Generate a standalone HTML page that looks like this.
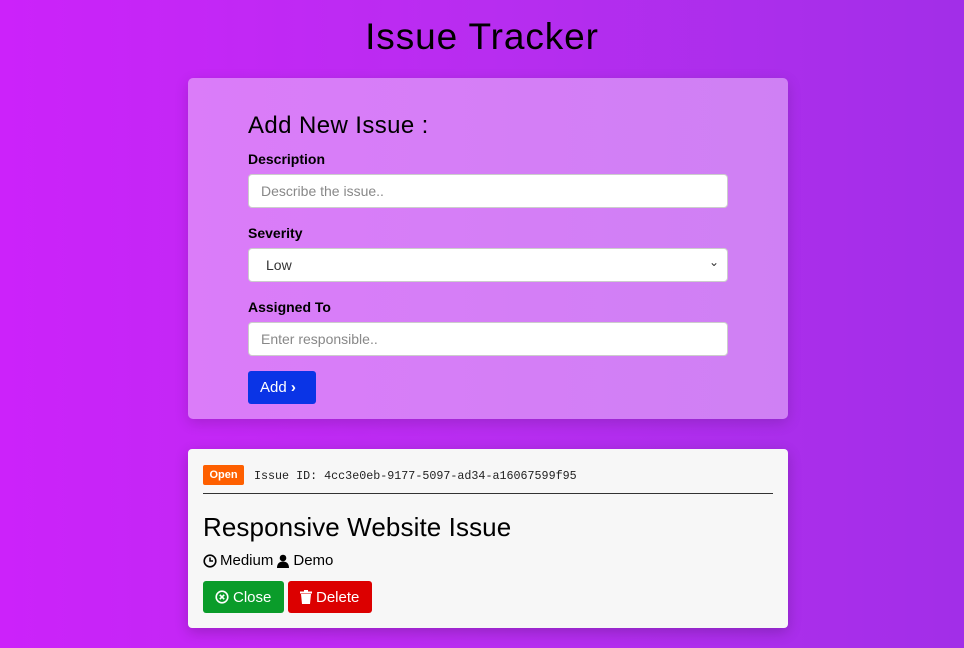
<!DOCTYPE html>
<html><head><style>
*{box-sizing:border-box;margin:0;padding:0}
body{width:964px;height:648px;overflow:hidden;background:linear-gradient(90deg,#cc22fa 0%,#b82df0 50%,#a22ee8 100%);font-family:"Liberation Sans",sans-serif;position:relative}
h1{position:absolute;top:16px;left:0;width:964px;text-align:center;font-size:37px;font-weight:normal;color:#000;letter-spacing:0.9px}
.form{position:absolute;left:188px;top:78px;width:600px;height:341px;border-radius:5px;background:linear-gradient(90deg,#db7cf9,#cf80f4);box-shadow:0 4px 14px rgba(0,0,0,.15)}
.form h2{position:absolute;left:60px;top:34px;font-size:24px;font-weight:normal;letter-spacing:0.4px}
.lbl{position:absolute;left:60px;font-size:14px;font-weight:bold}
.inp{position:absolute;left:60px;width:480px;height:34px;background:#fff;border:1px solid #ccc;border-radius:4px;font-size:14px;color:#888;padding:8px 12px}
.add{position:absolute;left:60px;top:293px;width:68px;height:33px;background:#0a34e6;border-radius:3px;color:#fff;font-size:15px;padding:8px 12px}
.card{position:absolute;left:188px;top:449px;width:600px;height:179px;background:#f7f7f7;border-radius:4px;box-shadow:0 4px 14px rgba(0,0,0,.2)}
.badge{position:absolute;left:15px;top:16px;width:41px;height:20px;background:#fe5f00;border-radius:2px;color:#fff;font-size:11px;font-weight:bold;text-align:center;line-height:20px}
.id{position:absolute;left:66px;top:20px;font-family:"Liberation Mono",monospace;font-size:11.7px;color:#222}
.hr{position:absolute;left:15px;top:44px;width:570px;border-top:1px solid #333}
.title{position:absolute;left:15px;top:63px;font-size:26px;letter-spacing:0.1px}
.meta{position:absolute;left:15px;top:103px;font-size:15px;display:flex;align-items:center;gap:3px}
.btn{position:absolute;top:132px;height:32px;border-radius:3px;color:#fff;font-size:15px;display:flex;align-items:center;gap:4px;padding-left:12px}
</style></head><body>
<h1>Issue Tracker</h1>
<div class="form">
<h2>Add New Issue :</h2>
<div class="lbl" style="top:73px">Description</div>
<div class="inp" style="top:96px">Describe the issue..</div>
<div class="lbl" style="top:147px">Severity</div>
<div class="inp" style="top:170px;color:#333;padding-left:17px">Low<span style="position:absolute;right:8px;top:6px;font-size:12px">&#8964;</span></div>
<div class="lbl" style="top:221px">Assigned To</div>
<div class="inp" style="top:244px">Enter responsible..</div>
<div class="add">Add <b>&#8250;</b></div>
</div>
<div class="card">
<div class="badge">Open</div>
<div class="id">Issue ID: 4cc3e0eb-9177-5097-ad34-a16067599f95</div>
<div class="hr"></div>
<div class="title">Responsive Website Issue</div>
<div class="meta"><svg width="14" height="14" viewBox="0 0 14 14"><circle cx="7" cy="7" r="5.8" fill="none" stroke="#000" stroke-width="1.6"/><path d="M7 3.5V7h3" fill="none" stroke="#000" stroke-width="1.5"/></svg>Medium <svg width="14" height="14" viewBox="0 0 14 14"><circle cx="7" cy="4" r="3.3"/><path d="M1 14c0-5 3-6.5 6-6.5s6 1.5 6 6.5z"/></svg>Demo</div>
<div class="btn" style="left:15px;width:81px;background:#0a9c2a"><svg width="14" height="14" viewBox="0 0 14 14"><circle cx="7" cy="7" r="5.8" fill="none" stroke="#fff" stroke-width="1.6"/><path d="M4.8 4.8l4.4 4.4M9.2 4.8l-4.4 4.4" stroke="#fff" stroke-width="1.6"/></svg>Close</div>
<div class="btn" style="left:100px;width:84px;background:#dc0000"><svg width="12" height="14" viewBox="0 0 12 14"><path d="M0 1.5h12v2H0zM4 0h4v2H4zM1 4h10l-1 10H2z" fill="#fff"/></svg>Delete</div>
</div>
</body></html>
